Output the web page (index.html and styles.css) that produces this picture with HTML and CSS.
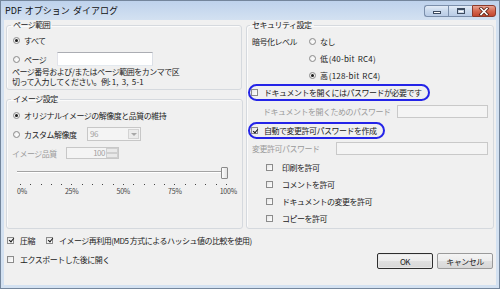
FILE: index.html
```html
<!DOCTYPE html>
<html lang="ja">
<head>
    <meta charset="UTF-8">
    <title>PDF オプション ダイアログ</title>
    <link rel="stylesheet" href="styles.css">
</head>
<body>
    <div class="window">
        <div class="titlebar">
            <span class="title">PDF オプション ダイアログ</span>
            <div class="caption-buttons">
                <span class="cap-btn cap-min"><i></i></span>
                <span class="cap-btn cap-max"><i></i></span>
                <span class="cap-btn cap-close">
                    <svg width="12" height="9" viewBox="0 0 12 9">
                        <path d="M3 1.5 L9 7.5 M9 1.5 L3 7.5" stroke="#5a2418" stroke-width="3.2" stroke-linecap="square"/>
                        <path d="M3 1.5 L9 7.5 M9 1.5 L3 7.5" stroke="#ffffff" stroke-width="1.6" stroke-linecap="square"/>
                    </svg>
                </span>
            </div>
        </div>

        <div class="client">
            <div class="groups">
                <div class="left-col">
                    <fieldset class="group group-range">
                        <legend>ページ範囲</legend>
                        <div class="row row-all">
                            <span class="radio on"></span>すべて
                        </div>
                        <div class="row row-pages">
                            <span class="radio"></span>ページ
                            <span class="field field-pages"></span>
                        </div>
                        <p class="help">ページ番号および/またはページ範囲をカンマで区<br>切って入力してください。例: <span class="latin">1, 3, 5-1</span></p>
                    </fieldset>

                    <fieldset class="group group-image">
                        <legend>イメージ設定</legend>
                        <div class="row row-original">
                            <span class="radio on"></span>オリジナルイメージの解像度と品質の維持
                        </div>
                        <div class="row row-custom">
                            <span class="lbl lbl-custom"><span class="radio"></span>カスタム解像度</span>
                            <span class="combo disabled">
                                <span class="combo-text">96</span>
                                <span class="combo-btn"><i></i></span>
                            </span>
                        </div>
                        <div class="row row-quality">
                            <span class="lbl lbl-quality dim">イメージ品質</span>
                            <span class="spin disabled">
                                <span class="spin-text">100</span>
                                <span class="spin-btns"><i></i><i></i></span>
                            </span>
                        </div>
                        <div class="slider">
                            <div class="track"></div>
                            <div class="thumb"></div>
                        </div>
                        <div class="ticks">
                            <i></i><i></i><i></i><i></i><i></i><i></i><i></i>
                            <i></i><i></i><i></i><i></i><i></i><i></i><i></i>
                            <i></i><i></i><i></i><i></i><i></i><i></i><i></i>
                        </div>
                        <div class="scale">
                            <span>0%</span><span>25%</span><span>50%</span><span>75%</span><span>100%</span>
                        </div>
                    </fieldset>
                </div>

                <fieldset class="group group-security">
                    <legend>セキュリティ設定</legend>
                    <div class="encryption">
                        <span class="lbl lbl-enc">暗号化レベル</span>
                        <div class="enc-options">
                            <div class="row"><span class="radio"></span>なし</div>
                            <div class="row"><span class="radio"></span>低&nbsp;<span class="latin">(40-bit RC4)</span></div>
                            <div class="row"><span class="radio on"></span>高&nbsp;<span class="latin">(128-bit RC4)</span></div>
                        </div>
                    </div>

                    <div class="row">
                        <span class="marked marked-open"><span class="check"></span>ドキュメントを開くにはパスワードが必要です</span>
                    </div>
                    <div class="row row-field row-open-pw">
                        <span class="dim lbl-open-pw">ドキュメントを開くためのパスワード</span>
                        <span class="field disabled field-grow"></span>
                    </div>
                    <div class="row">
                        <span class="marked marked-perm"><span class="check on"></span>自動で変更許可パスワードを作成</span>
                    </div>
                    <div class="row row-field">
                        <span class="dim lbl-perm-pw">変更許可パスワード</span>
                        <span class="field disabled field-grow"></span>
                    </div>

                    <div class="permissions">
                        <div class="row"><span class="check"></span>印刷を許可</div>
                        <div class="row"><span class="check"></span>コメントを許可</div>
                        <div class="row"><span class="check"></span>ドキュメントの変更を許可</div>
                        <div class="row"><span class="check"></span>コピーを許可</div>
                    </div>
                </fieldset>
            </div>

            <div class="bottom">
                <div class="options">
                    <div class="row">
                        <span class="check on"></span>圧縮
                        <span class="check on check-reuse"></span>イメージ再利用(MD5 方式によるハッシュ値の比較を使用)
                    </div>
                    <div class="row row-export">
                        <span class="check"></span>エクスポートした後に開く
                    </div>
                </div>
                <div class="buttons">
                    <button class="btn btn-default">OK</button>
                    <button class="btn">キャンセル</button>
                </div>
            </div>
        </div>
    </div>
</body>
</html>
```

FILE: styles.css
```css
* {
    box-sizing: border-box;
}
body {
    margin: 0;
    font-family: "Noto Sans CJK JP", sans-serif;
    font-size: 8px;
    letter-spacing: -0.5px;
    color: #222;
    background: #ffffff;
}
.latin {
    letter-spacing: 0.2px;
    word-spacing: 1px;
}
.window {
    width: 500px;
    height: 289px;
    border: 1px solid #74869c;
    background: #d3e1f1;
    padding: 0 3px 3px;
    display: flex;
    flex-direction: column;
    overflow: hidden;
}

/* title bar */
.titlebar {
    height: 19px;
    margin: 0 -3px;
    padding: 0 3px 0 4px;
    display: flex;
    justify-content: space-between;
    background: linear-gradient(#bed2ec, #d3e1f1);
}
.title {
    font-size: 9px;
    letter-spacing: 0;
    word-spacing: 1px;
    line-height: 19px;
    color: #111;
}
.caption-buttons {
    display: flex;
    margin-top: 4px;
    height: 12px;
}
.cap-btn {
    width: 24px;
    height: 12px;
    border: 1px solid #7b8fab;
    border-right: none;
    background: linear-gradient(#e3ecf7, #c8d8ec 50%, #b9cce6);
    display: flex;
    align-items: center;
    justify-content: center;
}
.cap-min {
    border-radius: 3px 0 0 3px;
}
.cap-min i {
    width: 8px;
    height: 3px;
    margin-top: 3px;
    background: #fff;
    border: 1px solid #3c4b60;
}
.cap-max i {
    width: 8px;
    height: 6px;
    border: 1px solid #3c4b60;
    border-top-width: 2px;
    background: #fff;
    box-shadow: inset 0 0 0 1px #c9d6e6;
}
.cap-close {
    width: 24px;
    border: 1px solid #8c3b2c;
    border-radius: 0 3px 3px 0;
    background: linear-gradient(#e8a595, #d5674f 50%, #c4462d);
}

/* client area */
.client {
    flex: 1;
    background: #f0f0f0;
    padding: 0 2px;
}
.groups {
    display: flex;
    gap: 4px;
}
.left-col {
    width: 236px;
    display: flex;
    flex-direction: column;
    gap: 4px;
}
.group {
    margin: 0;
    padding: 0 5px 0 6px;
    border: 1px solid #d5d9de;
    border-radius: 3px;
    box-shadow: inset 1px 1px 0 #fbfbfb;
}
.group legend {
    padding: 0 2px;
    margin-left: -2px;
    line-height: 10px;
}
.group-range {
    height: 70px;
}
.group-image {
    height: 135px;
}
.group-security {
    width: 248px;
    height: 209px;
    padding-left: 5px;
}

.row {
    display: flex;
    align-items: center;
    height: 12px;
    white-space: nowrap;
}
.dim {
    color: #9a9a9a;
}

/* radios and checkboxes */
.radio {
    width: 7px;
    height: 7px;
    margin: 0 4px 0 0;
    border: 1px solid #8b8b8b;
    border-radius: 50%;
    background: radial-gradient(circle at 60% 60%, #ffffff, #e4e4e4);
    position: relative;
    flex: none;
}
.radio.on::after {
    content: "";
    position: absolute;
    left: 1px;
    top: 1px;
    width: 3px;
    height: 3px;
    border-radius: 50%;
    background: #1a1a1a;
}
.check {
    width: 7px;
    height: 7px;
    margin-right: 6px;
    border: 1px solid #8b8b8b;
    background: linear-gradient(135deg, #e6e6e6, #ffffff);
    position: relative;
    flex: none;
}
.check.on::after {
    content: "";
    position: absolute;
    left: 1.5px;
    top: -0.5px;
    width: 2px;
    height: 4px;
    border: solid #1a1a1a;
    border-width: 0 1.5px 1.5px 0;
    transform: rotate(40deg);
}

/* page range */
.row-all {
    margin-top: 4px;
}
.row-pages {
    margin-top: 6px;
    height: 14px;
}
.field {
    height: 14px;
    border: 1px solid #abadb3;
    border-color: #abadb3 #dbdfe6 #e3e9ef #e2e3ea;
    background: #ffffff;
}
.field.disabled {
    border-color: #c9c9c9;
    background: #f4f4f4;
}
.field-pages {
    width: 96px;
    margin-left: 11px;
}
.help {
    margin: 1px 0 0 -1px;
    line-height: 9.5px;
    white-space: nowrap;
}

/* image settings */
.row-original {
    margin-top: 5px;
}
.row-custom {
    margin-top: 6px;
    height: 14px;
}
.lbl {
    display: flex;
    align-items: center;
    flex: none;
}
.lbl-custom {
    width: 74px;
}
.combo {
    width: 54px;
    height: 14px;
    border: 1px solid #c7c7c7;
    background: #f4f4f4;
    display: flex;
    justify-content: space-between;
    color: #a3a3a3;
}
.combo-text {
    padding-left: 2px;
    line-height: 12px;
}
.combo-btn {
    width: 11px;
    margin: 1px;
    border: 1px solid #d3d3d3;
    background: #ececec;
    display: flex;
    align-items: center;
    justify-content: center;
}
.combo-btn i {
    border: 3px solid transparent;
    border-top: 3px solid #a8a8a8;
    border-bottom: none;
}
.row-quality {
    margin-top: 6px;
}
.lbl-quality {
    width: 54px;
    margin-left: -1px;
}
.spin {
    width: 53px;
    height: 12px;
    border: 1px solid #c7c7c7;
    background: #f4f4f4;
    display: flex;
    justify-content: flex-end;
    color: #a3a3a3;
}
.spin-text {
    line-height: 10px;
    padding-right: 1px;
}
.spin-btns {
    width: 12px;
    display: flex;
    flex-direction: column;
}
.spin-btns i {
    flex: 1;
    border: 1px solid #cfcfcf;
    background: #e9e9e9;
}
.slider {
    position: relative;
    height: 16px;
    margin: 5px 0 0 4px;
    width: 211px;
}
.track {
    position: absolute;
    left: 0;
    right: 0;
    top: 7px;
    height: 2px;
    border-top: 1px solid #a3a3a3;
    border-bottom: 1px solid #ffffff;
}
.thumb {
    position: absolute;
    left: 204px;
    top: 3px;
    width: 7px;
    height: 12px;
    border: 1px solid #8a8a8a;
    border-radius: 1px;
    background: linear-gradient(90deg, #fdfdfd, #e2e2e2);
}
.ticks {
    display: flex;
    justify-content: space-between;
    width: 207px;
    margin: 4px 0 0 7px;
    height: 1px;
}
.ticks i {
    width: 1px;
    height: 1px;
    background: #444;
}
.scale {
    display: flex;
    justify-content: space-between;
    width: 220px;
    margin: 2px 0 0 4px;
    font-size: 7px;
    line-height: 8px;
    letter-spacing: -0.2px;
    color: #444;
}

/* security */
.encryption {
    display: flex;
    margin-top: 5px;
}
.lbl-enc {
    width: 57px;
    height: 12px;
}
.enc-options {
    display: flex;
    flex-direction: column;
    gap: 5px;
}
.marked {
    display: flex;
    align-items: center;
    height: 17px;
    margin-left: -4px;
    padding: 0 6px 0 1px;
    border: 2px solid #2424e8;
    border-radius: 9px;
}
.encryption + .row {
    margin-top: 3px;
    height: 17px;
}
.row-field {
    height: 13px;
    margin-top: 3px;
}
.row-open-pw {
    margin-top: 4px;
}
.row-open-pw + .row {
    margin-top: 4px;
    height: 17px;
}
.lbl-open-pw {
    margin-left: 11px;
}
.field-grow {
    flex: 1;
    height: 13px;
    margin-left: 6px;
}
.lbl-perm-pw + .field-grow {
    margin-left: 16px;
}
.permissions {
    display: flex;
    flex-direction: column;
    gap: 5px;
    margin: 6px 0 0 14px;
}
.permissions .check {
    margin-right: 9px;
}

/* bottom */
.bottom {
    display: flex;
    justify-content: space-between;
    padding: 0 1px 0 1px;
}
.options .row:first-child {
    margin-top: 5px;
}
.check-reuse {
    margin-left: 11px;
}
.row-export {
    margin-top: 7px;
}
.buttons {
    display: flex;
    gap: 4px;
    margin-top: 24px;
}
.btn {
    width: 56px;
    height: 16px;
    padding: 0;
    font-family: "Noto Sans CJK JP", sans-serif;
    font-size: 8px;
    letter-spacing: -0.5px;
    color: #222;
    border: 1px solid #9a9a9a;
    border-radius: 2px;
    background: linear-gradient(#f4f4f4, #ececec 50%, #e0e0e0 51%, #d8d8d8);
}
.btn-default {
    border-color: #2e2e2e;
    box-shadow: inset 0 0 0 1px #e8e8e8;
}
```
